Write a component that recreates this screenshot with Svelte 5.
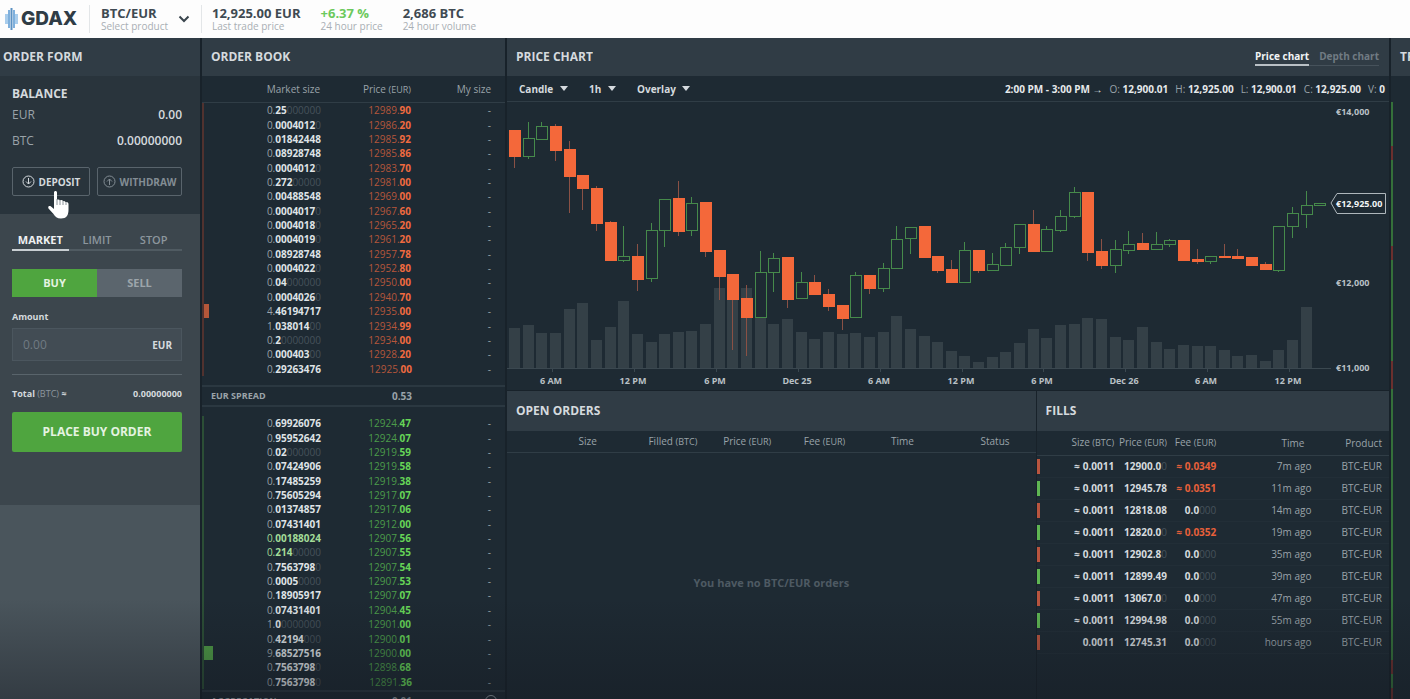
<script lang="ts">
  type Candle = readonly [high: number, top: number, bottom: number, low: number, side: string, volume: number];
  type Level = readonly [size: string, price: string, depth?: number, flash?: boolean];

  // high, body top, body bottom, low, direction, volume top
  const candles: readonly Candle[] = [
    [28, 28, 54, 66, "down", 226], [20, 36, 54, 57, "up", 223], [20, 24, 37, 37, "up", 231],
    [22, 24, 48, 59, "down", 231], [39, 47, 74, 111, "down", 207], [73, 73, 86, 108, "down", 201],
    [84, 86, 121, 129, "down", 238], [119, 120, 158, 159, "down", 225], [124, 154, 158, 160, "up", 199],
    [142, 154, 177, 189, "down", 232], [121, 128, 176, 180, "up", 240], [97, 97, 128, 145, "up", 232],
    [79, 96, 129, 134, "down", 230], [95, 101, 128, 134, "up", 229], [100, 100, 149, 155, "down", 222],
    [148, 148, 174, 198, "down", 186], [172, 172, 197, 248, "down", 190], [183, 196, 215, 254, "down", 186],
    [149, 170, 215, 216, "up", 215], [151, 156, 170, 190, "up", 222], [155, 155, 197, 206, "down", 217],
    [170, 180, 196, 197, "up", 230], [173, 180, 192, 193, "down", 237], [187, 192, 204, 209, "down", 230],
    [203, 203, 216, 228, "down", 232], [170, 173, 215, 216, "up", 231], [173, 173, 186, 192, "down", 235],
    [161, 166, 186, 190, "up", 230], [124, 137, 166, 166, "up", 214], [125, 125, 136, 152, "up", 227],
    [124, 124, 155, 155, "down", 234], [154, 154, 168, 171, "down", 240], [158, 167, 180, 180, "down", 249],
    [140, 148, 180, 180, "up", 254], [148, 148, 168, 171, "down", 260], [151, 162, 168, 168, "up", 255],
    [141, 145, 163, 163, "up", 250], [122, 122, 145, 152, "up", 241], [108, 122, 149, 149, "down", 227],
    [124, 127, 149, 149, "up", 236], [108, 114, 128, 130, "up", 223], [85, 90, 114, 116, "up", 222],
    [90, 90, 150, 159, "down", 216], [137, 149, 163, 167, "down", 217], [138, 147, 163, 171, "up", 235],
    [129, 142, 148, 152, "up", 238], [131, 141, 147, 147, "down", 225], [130, 142, 147, 147, "up", 240],
    [137, 138, 142, 145, "up", 247], [138, 138, 158, 158, "down", 243], [147, 157, 159, 162, "down", 244],
    [154, 154, 159, 162, "up", 244], [142, 154, 155, 155, "down", 248], [147, 154, 156, 156, "down", 254],
    [155, 155, 163, 163, "down", 253], [160, 162, 167, 167, "down", 259], [124, 124, 168, 170, "up", 248],
    [105, 111, 124, 136, "up", 238], [89, 103, 112, 126, "up", 205], [101, 101, 103, 103, "up", 266],
  ];

  const hours = ["6 AM", "12 PM", "6 PM", "Dec 25", "6 AM", "12 PM", "6 PM", "Dec 26", "6 AM", "12 PM"];

  const asks: readonly Level[] = [
    ["0.25", "12989.90"], ["0.0004012", "12986.20"], ["0.01842448", "12985.92"], ["0.08928748", "12985.86"],
    ["0.0004012", "12983.70"], ["0.272", "12981.00"], ["0.00488548", "12969.00"], ["0.0004017", "12967.60"],
    ["0.0004018", "12965.20"], ["0.0004019", "12961.20"], ["0.08928748", "12957.78"], ["0.0004022", "12952.80"],
    ["0.04", "12950.00"], ["0.0004026", "12940.70"], ["4.46194717", "12935.00", 5], ["1.038014", "12934.99"],
    ["0.2", "12934.00"], ["0.000403", "12928.20"], ["0.29263476", "12925.00"],
  ];

  const bids: readonly Level[] = [
    ["0.69926076", "12924.47"], ["0.95952642", "12924.07"], ["0.02", "12919.59"], ["0.07424906", "12919.58"],
    ["0.17485259", "12919.38"], ["0.75605294", "12917.07"], ["0.01374857", "12917.06"], ["0.07431401", "12912.00"],
    ["0.00188024", "12907.56", 0, true], ["0.214", "12907.55", 0, true], ["0.7563798", "12907.54"], ["0.0005", "12907.53"],
    ["0.18905917", "12907.07"], ["0.07431401", "12904.45"], ["1.0", "12901.00"], ["0.42194", "12900.01"],
    ["9.68527516", "12900.00", 9], ["0.7563798", "12898.68"], ["0.7563798", "12891.36"],
  ];

  const fills = [
    { side: "sell", size: "≈ 0.0011", price: "12900.0", pad: "0", fee: "≈ 0.0349", time: "7m ago" },
    { side: "buy", size: "≈ 0.0011", price: "12945.78", pad: "", fee: "≈ 0.0351", time: "11m ago" },
    { side: "sell", size: "≈ 0.0011", price: "12818.08", pad: "", fee: "", time: "14m ago" },
    { side: "buy", size: "≈ 0.0011", price: "12820.0", pad: "0", fee: "≈ 0.0352", time: "19m ago" },
    { side: "sell", size: "≈ 0.0011", price: "12902.8", pad: "0", fee: "", time: "35m ago" },
    { side: "buy", size: "≈ 0.0011", price: "12899.49", pad: "", fee: "", time: "39m ago" },
    { side: "sell", size: "≈ 0.0011", price: "13067.0", pad: "0", fee: "", time: "47m ago" },
    { side: "buy", size: "≈ 0.0011", price: "12994.98", pad: "", fee: "", time: "55m ago" },
    { side: "sell", size: "0.0011", price: "12745.31", pad: "", fee: "", time: "hours ago" },
  ];

  // side and share of the trade history strip
  const trades = [
    ["buy", 44], ["sell", 14], ["buy", 86], ["sell", 14], ["buy", 101],
    ["sell", 28], ["buy", 271], ["sell", 14], ["buy", 14], ["sell", 11],
  ] as const;

  const orderTypes = ["MARKET", "LIMIT", "STOP"];
  let orderType = $state("MARKET");
  let side = $state("BUY");
  let amount = $state("");

  function candleX(index: number): number {
    return Math.round(7 + index * 13.65);
  }

  function zeros(size: string): string {
    return "0".repeat(10 - size.length);
  }
</script>

{#snippet levels(rows: readonly Level[])}
  <tbody>
    {#each rows as [size, price, depth, flash], index (index)}
      <tr>
        <td class:flash>
          {#if depth}<span class="depth" style={`width: ${String(depth)}px`}></span>{/if}
          <span class="lead">{size.slice(0, 2)}</span><b>{size.slice(2)}</b><span class="zeros">{zeros(size)}</span>
        </td>
        <td class="price">{price.slice(0, 6)}<b>{price.slice(6)}</b></td>
        <td>-</td>
      </tr>
    {/each}
  </tbody>
{/snippet}

<div class="app">
  <header class="topbar">
    <a class="logo" href="#home" aria-label="GDAX">
      <svg width="13" height="24" viewBox="0 0 13 24" aria-hidden="true">
        <path d="M1.500 7v10M11.500 7v10" stroke="#a9cdec" stroke-width="3" />
        <path d="M4 3v18M9 3v18" stroke="#7fb0dc" stroke-width="2" />
        <path d="M6.500 1v22" stroke="#5b91c2" stroke-width="2" />
      </svg>
      <span>GDAX</span>
    </a>
    <button class="product" type="button">
      <span class="stat"><strong>BTC/EUR</strong><small>Select product</small></span>
      <svg width="12" height="8" viewBox="0 0 12 8" aria-hidden="true">
        <path d="M1.500 1.500 6 6l4.500-4.500" fill="none" stroke="#3a454d" stroke-width="2" />
      </svg>
    </button>
    <div class="stats">
      <div class="stat"><strong>12,925.00 EUR</strong><small>Last trade price</small></div>
      <div class="stat gain"><strong>+6.37 %</strong><small>24 hour price</small></div>
      <div class="stat"><strong>2,686 BTC</strong><small>24 hour volume</small></div>
    </div>
  </header>

  <main class="workspace">
    <aside class="order-form">
      <h2>ORDER FORM</h2>
      <section class="balance">
        <h3>BALANCE</h3>
        <dl>
          <div><dt>EUR</dt><dd>0.00</dd></div>
          <div><dt>BTC</dt><dd>0.00000000</dd></div>
        </dl>
        <div class="transfers">
          <button class="deposit" type="button">
            <svg width="13" height="13" viewBox="0 0 13 13" aria-hidden="true">
              <circle cx="6.500" cy="6.500" r="5.500" />
              <path d="M6.500 3v6M4 6.500 6.500 9 9 6.500" />
            </svg>
            DEPOSIT
          </button>
          <button class="withdraw" type="button">
            <svg width="13" height="13" viewBox="0 0 13 13" aria-hidden="true">
              <circle cx="6.500" cy="6.500" r="5.500" />
              <path d="M6.500 10V4M4 6.500 6.500 4 9 6.500" />
            </svg>
            WITHDRAW
          </button>
          <svg class="pointer" width="22" height="28" viewBox="0 0 22 28" aria-hidden="true">
            <path d="M6 1.500c0-2 3-2 3 0V9c1-.8 2.500-.5 3 .5 1-.8 2.500-.4 3 .6 1-.5 2 0 2.500 1 1.500-.6 3 .3 3 2V19c0 5-2 8.500-7.500 8.500-4 0-6-2-7.500-4.500L.5 17.500c-1-2 1-3 2.500-2l3 2.500z" />
            <path class="knuckles" d="M9 8v6M12 9v5M15 10v4M18 11v3" />
          </svg>
        </div>
      </section>
      <form class="ticket" onsubmit={(event) => event.preventDefault()}>
        <div class="types">
          {#each orderTypes as type (type)}
            <button type="button" class:active={orderType === type} onclick={() => (orderType = type)}>{type}</button>
          {/each}
        </div>
        <div class="sides">
          <button type="button" class:active={side === "BUY"} onclick={() => (side = "BUY")}>BUY</button>
          <button type="button" class:active={side === "SELL"} onclick={() => (side = "SELL")}>SELL</button>
        </div>
        <label class="amount-label" for="amount">Amount</label>
        <div class="amount">
          <input id="amount" placeholder="0.00" bind:value={amount} />
          <b>EUR</b>
        </div>
        <div class="total"><span><b>Total</b> (BTC) <b>≈</b></span><b>0.00000000</b></div>
        <button class="place" type="submit">PLACE {side} ORDER</button>
      </form>
    </aside>

    <section class="order-book">
      <h2>ORDER BOOK</h2>
      <table class="book-head">
        <thead>
          <tr><th>Market size</th><th>Price <small>(EUR)</small></th><th>My size</th></tr>
        </thead>
      </table>
      <table class="book asks" aria-label="Asks">{@render levels(asks)}</table>
      <div class="spread"><b>EUR SPREAD</b><b>0.53</b></div>
      <table class="book bids" aria-label="Bids">{@render levels(bids)}</table>
      <div class="spread aggregation">
        <b>AGGREGATION</b><b>0.01</b>
        <button type="button" aria-label="Increase aggregation"></button>
      </div>
    </section>

    <div class="market">
      <section class="chart">
        <div class="title-row">
          <h2>PRICE CHART</h2>
          <nav>
            <a class="active" href="#price">Price chart</a>
            <a href="#depth">Depth chart</a>
          </nav>
        </div>
        <div class="toolbar">
          <label class="pick kind">
            <select aria-label="Chart type"><option>Candle</option><option>Line</option></select><i></i>
          </label>
          <label class="pick interval">
            <select aria-label="Interval"><option>1h</option><option>6h</option></select><i></i>
          </label>
          <label class="pick overlay">
            <select aria-label="Overlay"><option>Overlay</option><option>EMA</option></select><i></i>
          </label>
          <p>
            <b>2:00 PM - 3:00 PM →</b>
            <span>O: <b>12,900.01</b></span>
            <span>H: <b>12,925.00</b></span>
            <span>L: <b>12,900.01</b></span>
            <span>C: <b>12,925.00</b></span>
            <span>V: <b>0</b></span>
          </p>
        </div>
        <svg class="plot" viewBox="0 0 882 288" role="img" aria-label="BTC/EUR price and volume by hour">
          {#each candles as [, , , , , volume], index (index)}
            <rect class="volume" x={candleX(index) - 5} y={volume} width="11" height={266 - volume} />
          {/each}
          <path class="axis" d="M0 266.500H824" />
          {#each hours as hour, index (index)}
            <path class="axis" d={`M${String(Math.round(45 + index * 81.9))}.500 266v4`} />
            <text x={Math.round(44 + index * 81.9)} y="282" text-anchor="middle">{hour}</text>
          {/each}
          {#each candles as [high, top, bottom, low, direction], index (index)}
            <g class={direction}>
              <path d={`M${String(candleX(index))}.500 ${String(high)}V${String(top)}M${String(candleX(index))}.500 ${String(bottom)}V${String(low)}`} />
              <rect x={candleX(index) - 4.5} y={top + 0.5} width="11" height={bottom - top} />
            </g>
          {/each}
          <text x="829" y="13">€14,000</text>
          <text x="829" y="184">€12,000</text>
          <text x="829" y="269">€11,000</text>
          <path class="tag" d="M824 101 830 91.500H878.500V111.500H830z" />
          <text class="last" x="829" y="105">€12,925.00</text>
        </svg>
      </section>

      <div class="lists">
        <section class="orders">
          <h2>OPEN ORDERS</h2>
          <table>
            <thead>
              <tr>
                <th>Size</th>
                <th>Filled <small>(BTC)</small></th>
                <th>Price <small>(EUR)</small></th>
                <th>Fee <small>(EUR)</small></th>
                <th>Time</th>
                <th>Status</th>
              </tr>
            </thead>
          </table>
          <p>You have no BTC/EUR orders</p>
        </section>

        <section class="fills">
          <h2>FILLS</h2>
          <table>
            <thead>
              <tr>
                <th>Size <small>(BTC)</small></th>
                <th>Price <small>(EUR)</small></th>
                <th>Fee <small>(EUR)</small></th>
                <th class="time">Time</th>
                <th>Product</th>
              </tr>
            </thead>
            <tbody>
              {#each fills as fill, index (index)}
                <tr>
                  <td class={`mark ${fill.side}`}><b>{fill.size}</b></td>
                  <td><b>{fill.price}</b><span class="zeros">{fill.pad}</span></td>
                  <td>
                    {#if fill.fee}<b class="fee">{fill.fee}</b>{:else}<b>0.0</b><span class="zeros">000</span>{/if}
                  </td>
                  <td>{fill.time}</td>
                  <td>BTC-EUR</td>
                </tr>
              {/each}
            </tbody>
          </table>
        </section>
      </div>
    </div>

    <section class="history">
      <h2>TRADE HISTORY</h2>
      <div class="strip">
        {#each trades as [tradeSide, share], index (index)}
          <span class={tradeSide} style={`flex-grow: ${String(share)}`}></span>
        {/each}
      </div>
    </section>
  </main>
  <div class="shade"></div>
</div>

<style>
  :global(body) {
    background: #1e2a33;
  }

  .app {
    --panel: #1e2a33;
    --bar: #303c45;
    --line: #303d46;
    --gap: #18222a;
    --text: #d5dade;
    --muted: #9aa3a9;
    --green: #4fa53f;
    --orange: #f4683a;
    position: relative;
    height: 100vh;
    overflow: hidden;
    display: flex;
    flex-direction: column;
    background: var(--gap);
    color: var(--text);
    font-family: "Open Sans", sans-serif;
    font-size: 10px;
    line-height: 14px;
  }

  .app * {
    box-sizing: border-box;
  }

  button,
  input,
  select {
    margin: 0;
    padding: 0;
    border: 0;
    background: none;
    color: inherit;
    font: inherit;
  }

  h2,
  h3,
  p,
  dl,
  dd {
    margin: 0;
  }

  h2 {
    height: 38px;
    padding-left: 9px;
    overflow: hidden;
    background: var(--bar);
    font-size: 12px;
    line-height: 38px;
    white-space: nowrap;
  }

  a {
    color: inherit;
    text-decoration: none;
  }

  table {
    width: 100%;
    border-collapse: collapse;
    table-layout: fixed;
  }

  th,
  td {
    padding: 0;
    text-align: right;
    white-space: nowrap;
  }

  th {
    color: var(--muted);
    font-weight: 400;
  }

  th small {
    font-size: 9px;
  }

  .topbar {
    flex: none;
    height: 38px;
    padding-left: 5px;
    display: flex;
    align-items: center;
    background: #fdfdfd;
    color: #3f4a52;
  }

  .logo {
    width: 84px;
    display: flex;
    align-items: center;
    gap: 3px;
    color: #2f3c46;
    font-family: Inter, sans-serif;
    font-size: 19px;
    font-weight: 800;
    line-height: 24px;
  }

  .product {
    width: 113px;
    height: 28px;
    padding: 0 11px;
    display: flex;
    align-items: center;
    justify-content: space-between;
    border: solid #e3e6e8;
    border-width: 0 1px;
    text-align: left;
  }

  .stats {
    padding-left: 10px;
    display: flex;
    gap: 20px;
  }

  .stat {
    display: grid;
  }

  .stat strong {
    font-size: 13px;
    line-height: 13px;
  }

  .stat small {
    color: #a9afb4;
    font-size: 10px;
    line-height: 12px;
  }

  .gain strong {
    color: #6cc95c;
  }

  .workspace {
    flex: 1;
    min-height: 0;
    display: grid;
    grid-template-columns: 200px 303px minmax(0, 1fr) 19px;
    gap: 2px;
  }

  .workspace > * {
    min-height: 0;
    overflow: hidden;
  }

  .order-form {
    background: #4a555c;
  }

  .order-form h2 {
    padding-left: 3px;
  }

  .balance {
    height: 138px;
    padding: 10px 18px 0 12px;
    background: #29343c;
  }

  h3 {
    font-size: 12px;
    line-height: 16px;
  }

  .balance dl {
    padding-bottom: 13px;
    color: var(--muted);
    font-size: 12px;
    line-height: 26px;
  }

  .balance dl div,
  .total {
    display: flex;
    justify-content: space-between;
  }

  dd {
    color: var(--text);
    font-weight: 600;
  }

  .transfers {
    position: relative;
    display: flex;
    gap: 7px;
  }

  .transfers button {
    width: 78px;
    height: 29px;
    display: flex;
    align-items: center;
    justify-content: center;
    gap: 4px;
    border: 1px solid #59646c;
    border-radius: 2px;
    font-weight: 700;
  }

  .transfers .withdraw {
    flex: 1;
    color: #838d94;
  }

  .transfers button svg {
    fill: none;
    stroke: currentColor;
  }

  .pointer {
    position: absolute;
    top: 24px;
    left: 36px;
    fill: #fff;
  }

  .knuckles {
    fill: none;
    stroke: #8a9298;
  }

  .ticket {
    height: 291px;
    padding: 16px 18px 0 12px;
    background: #3c464d;
  }

  .types {
    display: flex;
    margin-bottom: 18px;
  }

  .types button {
    flex: 1;
    height: 21px;
    border-bottom: 2px solid #505b62;
    color: #8c969d;
    font-size: 11px;
    font-weight: 600;
  }

  .types button.active {
    border-color: #c8ced2;
    color: #eef0f1;
    font-weight: 700;
  }

  .sides {
    display: flex;
    margin-bottom: 13px;
  }

  .sides button {
    flex: 1;
    height: 28px;
    background: #5b656d;
    color: #9da5ab;
    font-size: 11px;
    font-weight: 700;
  }

  .sides button.active {
    background: var(--green);
    color: #e4f3e1;
  }

  .amount-label {
    display: block;
    margin-bottom: 4px;
    font-size: 9px;
    font-weight: 700;
  }

  .amount {
    height: 33px;
    padding: 0 9px 0 10px;
    display: flex;
    align-items: center;
    border: 1px solid #4b565e;
    background: #424c54;
  }

  .amount input {
    flex: 1;
    min-width: 0;
    outline: 0;
    font-size: 12px;
  }

  .amount input::placeholder {
    color: #707b83;
  }

  .total {
    margin: 13px 0 11px;
    padding-top: 12px;
    border-top: 1px solid #59646b;
    color: #8c969d;
    font-size: 9px;
  }

  .total b {
    color: var(--text);
  }

  .place {
    width: 100%;
    height: 40px;
    border-radius: 2px;
    background: var(--green);
    color: #e4f3e1;
    font-size: 12px;
    font-weight: 700;
  }

  .order-book {
    background: var(--panel);
  }

  .book-head {
    height: 27px;
    border-bottom: 1px solid var(--line);
  }

  .book {
    height: 273px;
    line-height: 13px;
  }

  .order-book tr > :first-child {
    width: 118px;
  }

  .order-book tr > :nth-child(2) {
    width: 91px;
  }

  .order-book tr > :last-child {
    padding-right: 14px;
  }

  .book td {
    position: relative;
    padding-top: 1px;
    color: var(--muted);
  }

  .book b {
    color: #dfe3e6;
  }

  .book .flash,
  .book .flash b {
    color: #a3dc98;
  }

  .asks {
    border-left: 2px solid #51322f;
  }

  .bids {
    border-left: 2px solid #2c4f36;
  }

  .asks .price {
    color: #b5563b;
  }

  .asks .price b {
    color: #f06a40;
  }

  .bids .price {
    color: #4c9c4a;
  }

  .bids .price b {
    color: #66d557;
  }

  .depth {
    position: absolute;
    inset: 0 auto 0 0;
    background: #b4573a;
  }

  .bids .depth {
    background: #4f9c46;
  }

  .zeros {
    color: #46525b;
  }

  .spread {
    position: relative;
    height: 22px;
    margin: 9px 0;
    padding: 0 93px 0 9px;
    display: flex;
    align-items: center;
    justify-content: space-between;
    border: solid #2b3841;
    border-width: 2px 0;
    color: var(--muted);
    font-size: 9px;
  }

  .spread b:nth-child(2) {
    font-size: 10px;
  }

  .aggregation {
    margin-top: 1px;
  }

  .aggregation button {
    position: absolute;
    top: 3px;
    right: 8px;
    width: 12px;
    height: 12px;
    border: 1px solid var(--muted);
    border-radius: 50%;
  }

  .market {
    display: flex;
    flex-direction: column;
  }

  .chart,
  .orders,
  .fills {
    background: var(--panel);
  }

  .title-row {
    padding-right: 10px;
    display: flex;
    align-items: center;
    justify-content: space-between;
    background: var(--bar);
  }

  nav {
    display: flex;
    color: #707b83;
    font-weight: 700;
  }

  nav a {
    padding-left: 10px;
    border-bottom: 1px solid #46525b;
    line-height: 15px;
  }

  nav .active {
    padding: 0;
    border-bottom: 2px solid #b9c0c5;
    color: #f2f4f5;
  }

  .toolbar {
    height: 26px;
    padding: 0 4px 0 12px;
    display: flex;
    align-items: center;
    gap: 21px;
    border-bottom: 1px solid var(--line);
    font-weight: 700;
  }

  .pick {
    display: flex;
    align-items: center;
    gap: 5px;
  }

  .pick select {
    appearance: none;
  }

  .kind select {
    width: 36px;
  }

  .interval select {
    width: 14px;
  }

  .overlay select {
    width: 40px;
  }

  .pick i {
    border: 4px solid transparent;
    border-top: 5px solid var(--text);
    border-bottom: 0;
  }

  .toolbar p {
    margin-left: auto;
    display: flex;
    gap: 7px;
    color: var(--muted);
    font-weight: 400;
  }

  .toolbar p b {
    color: #e6e9eb;
  }

  .plot {
    display: block;
    width: 100%;
  }

  .volume {
    fill: #344047;
  }

  .axis {
    fill: none;
    stroke: #3b4850;
  }

  .plot text {
    fill: #b9c0c5;
    font-size: 9px;
    font-weight: 700;
  }

  .plot .last {
    fill: #f2f4f5;
  }

  .up {
    fill: var(--panel);
    stroke: #468a4b;
  }

  .down {
    fill: var(--orange);
    stroke: var(--orange);
  }

  .down path {
    stroke: #8a5145;
  }

  .tag {
    fill: var(--panel);
    stroke: #aeb6bb;
  }

  .lists {
    flex: 1;
    min-height: 0;
    padding-top: 1px;
    display: grid;
    grid-template-columns: 3fr 2fr;
    gap: 1px;
  }

  .lists h2 {
    height: 40px;
    line-height: 39px;
  }

  .orders {
    display: flex;
    flex-direction: column;
  }

  .orders thead tr {
    height: 21px;
    border-bottom: 1px solid var(--line);
  }

  .orders p {
    margin: auto;
    padding-top: 14px;
    color: #4e5a63;
    font-size: 11px;
    font-weight: 700;
  }

  .fills thead tr {
    height: 24px;
    border-bottom: 1px solid var(--line);
  }

  .fills td {
    height: 22px;
    border-bottom: 1px solid #222e37;
    color: var(--muted);
  }

  .fills td b {
    color: var(--text);
  }

  .fills td .fee {
    color: #e8603a;
  }

  .mark {
    background: linear-gradient(#b9553f, #b9553f) left center / 3px 15px no-repeat;
  }

  .mark.buy {
    background-image: linear-gradient(#5fb653, #5fb653);
  }

  .history {
    display: flex;
    flex-direction: column;
    background: var(--panel);
  }

  .history h2 {
    flex: none;
  }

  .strip {
    flex: 1;
    width: 2px;
    margin-top: 26px;
    display: flex;
    flex-direction: column;
  }

  .strip .buy {
    background: #35703a;
  }

  .strip .sell {
    background: #6b302e;
  }

  .shade {
    position: absolute;
    inset: auto 0 0;
    height: 100px;
    background: linear-gradient(transparent, rgb(18 22 30 / 40%));
    pointer-events: none;
  }

  .orders th:nth-child(1) {
    width: 17%;
  }

  .orders th:nth-child(2) {
    width: 19%;
  }

  .orders th:nth-child(3),
  .orders th:nth-child(4) {
    width: 14%;
  }

  .orders th:nth-child(5) {
    width: 13%;
  }

  .orders th:last-child {
    padding-right: 26px;
  }

  .fills th:nth-child(1) {
    width: 22%;
  }

  .fills th:nth-child(2) {
    width: 15%;
  }

  .fills th:nth-child(3) {
    width: 14%;
  }

  .fills th:nth-child(4) {
    width: 27%;
  }

  .fills .time {
    padding-right: 7px;
  }

  .fills tr > :last-child {
    padding-right: 7px;
  }
</style>
